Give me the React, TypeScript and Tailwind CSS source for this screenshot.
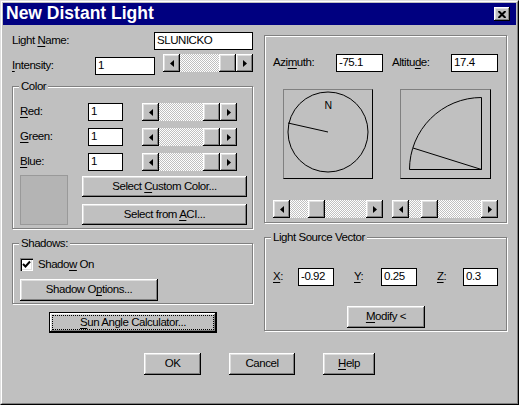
import React from "react"

// win95 bevels
const raised =
  "bg-[#c0c0c0] shadow-[inset_-1px_-1px_0_#000,inset_1px_1px_0_#fff,inset_-2px_-2px_0_#808080,inset_2px_2px_0_#dfdfdf]"
const field = "bg-white border border-black px-[2px] h-[18px] flex items-center shrink-0"
const etched = "relative border border-[#808080] shadow-[inset_1px_1px_0_#fff,1px_1px_0_#fff]"
const track =
  "bg-[#dfdfdf] bg-[image:repeating-conic-gradient(#fff_0%_25%,#c0c0c0_0%_50%)] bg-[length:2px_2px]"

function U({ children }: { children: React.ReactNode }) {
  return <span className="underline underline-offset-[2px] decoration-1">{children}</span>
}

function Legend({ children }: { children: React.ReactNode }) {
  return (
    <span className="absolute left-[6px] -top-[8px] px-[2px] bg-[#c0c0c0] leading-[14px]">{children}</span>
  )
}

function Btn({ className, children }: { className: string; children: React.ReactNode }) {
  return <div className={`${raised} ${className} flex items-center justify-center shrink-0`}>{children}</div>
}

function Arrow({ dir }: { dir: "left" | "right" }) {
  return (
    <div className={`${raised} w-[17px] h-full flex items-center justify-center shrink-0`}>
      <svg width="4" height="7" viewBox="0 0 4 7">
        {dir === "left" ? (
          <polygon points="4,0 4,7 0,3.5" fill="#000" />
        ) : (
          <polygon points="0,0 0,7 4,3.5" fill="#000" />
        )}
      </svg>
    </div>
  )
}

function Scroll({ className, before, after }: { className: string; before: string; after: string }) {
  return (
    <div className={`flex h-[18px] shrink-0 ${className}`}>
      <Arrow dir="left" />
      <div className={`${track} ${before} h-full`} />
      <div className={`${raised} w-[17px] h-full shrink-0`} />
      <div className={`${track} ${after} h-full`} />
      <Arrow dir="right" />
    </div>
  )
}

function ColorRow({ label, first, className }: { label: string; first: string; className?: string }) {
  return (
    <div className={`flex items-center h-[18px] ${className ?? ""}`}>
      <span className="w-[68px]">
        <U>{first}</U>
        {label}
      </span>
      <div className={`${field} w-[35px]`}>1</div>
      <Scroll className="ml-[19px] w-[95px]" before="flex-1" after="w-0" />
    </div>
  )
}

export default function App() {
  return (
    <div className="w-[519px] h-[405px] bg-[#c0c0c0] border border-t-[#dfdfdf] border-l-[#dfdfdf] border-r-black border-b-black font-['Liberation_Sans',Arial,sans-serif] text-[11.5px] tracking-[-0.45px] text-black select-none">
      <div className="h-full border border-t-white border-l-white border-r-[#808080] border-b-[#808080] p-px flex flex-col">
        {/* title bar */}
        <div className="h-[22px] bg-[#000080] flex items-center justify-between pl-[3px] pr-[6px] shrink-0">
          <span className="text-white font-bold text-[17.5px] tracking-normal leading-none">New Distant Light</span>
          <div className={`${raised} w-[16px] h-[14px] flex items-center justify-center`}>
            <svg width="8" height="7" viewBox="0 0 8 7">
              <path d="M0.5 0 L7.5 7 M7.5 0 L0.5 7" stroke="#000" strokeWidth="2" />
            </svg>
          </div>
        </div>

        <div className="flex pl-[9px] pt-[7px] gap-[11px]">
          {/* left column */}
          <div className="w-[241px] flex flex-col">
            <div className="flex items-center justify-between h-[18px]">
              <span>
                Light <U>N</U>ame:
              </span>
              <div className={`${field} w-[99px]`}>SLUNICKO</div>
            </div>
            <div className="flex items-start mt-[4px]">
              <span className="w-[83px] h-[18px] mt-[3px] flex items-center">
                <span>
                  <U>I</U>ntensity:
                </span>
              </span>
              <div className={`${field} w-[60px] mt-[3px]`}>1</div>
              <Scroll className="ml-[8px] w-[90px]" before="flex-1" after="w-0" />
            </div>

            {/* Color */}
            <div className={`${etched} mt-[11px] pt-[16px] pl-[7px] pb-[3px]`}>
              <Legend>Color</Legend>
              <ColorRow first="R" label="ed:" />
              <ColorRow first="G" label="reen:" className="mt-[7px]" />
              <ColorRow first="B" label="lue:" className="mt-[7px]" />
              <div className="flex gap-[14px] mt-[4px]">
                <div className="w-[48px] h-[50px] bg-[#b4b4b4] border border-[#999]" />
                <div className="flex flex-col gap-[7px] pt-px">
                  <Btn className="w-[165px] h-[21px]">
                    <span>
                      Select <U>C</U>ustom Color...
                    </span>
                  </Btn>
                  <Btn className="w-[165px] h-[21px]">
                    <span>
                      Select from <U>A</U>CI...
                    </span>
                  </Btn>
                </div>
              </div>
            </div>

            {/* Shadows */}
            <div className={`${etched} mt-[14px] pt-[14px] pl-[7px] pb-[2px]`}>
              <Legend>Shadows:</Legend>
              <div className="flex items-center gap-[5px] h-[13px]">
                <div className="w-[13px] h-[13px] bg-white shadow-[inset_1px_1px_0_#808080,inset_2px_2px_0_#000,inset_-1px_-1px_0_#fff,inset_-2px_-2px_0_#dfdfdf] flex items-center justify-center">
                  <svg width="9" height="9" viewBox="0 0 9 9">
                    <path d="M1 4 L3.5 6.5 L8 1.5" fill="none" stroke="#000" strokeWidth="2" />
                  </svg>
                </div>
                <span>
                  Shado<U>w</U> On
                </span>
              </div>
              <Btn className="w-[138px] h-[22px] mt-[8px]">
                <span>
                  Shadow O<U>p</U>tions...
                </span>
              </Btn>
            </div>

            {/* default button */}
            <div className="ml-[37px] mt-[8px] w-[168px] h-[21px] border border-black">
              <div className={`${raised} h-full p-[2px]`}>
                <div className="h-full border border-dotted border-black flex items-center justify-center">
                  <span>
                    <U>S</U>un Angle Calculator...
                  </span>
                </div>
              </div>
            </div>
          </div>

          {/* right column */}
          <div className="w-[243px] mt-[3px] flex flex-col">
            <div className={`${etched} pt-[18px] pl-[8px] pb-[4px]`}>
              <div className="flex items-center h-[18px]">
                <span className="w-[63px]">
                  Azi<U>m</U>uth:
                </span>
                <div className={`${field} w-[47px]`}>-75.1</div>
                <span className="w-[59px] ml-[9px]">
                  Altitu<U>d</U>e:
                </span>
                <div className={`${field} w-[47px]`}>17.4</div>
              </div>
              <div className="flex ml-[10px] mt-[17px] gap-[27px]">
                <div className="w-[90px] h-[90px] border border-t-[#808080] border-l-[#808080] border-r-black border-b-black">
                  <svg width="88" height="88" viewBox="0 0 88 88">
                    <circle cx="44" cy="42" r="40" fill="none" stroke="#000" strokeWidth="1" />
                    <text x="44" y="19" fontSize="10.5" textAnchor="middle" fontFamily="Liberation Sans, Arial, sans-serif" fill="#000">
                      N
                    </text>
                    <line x1="44" y1="42" x2="4" y2="33" stroke="#000" strokeWidth="1" />
                  </svg>
                </div>
                <div className="w-[91px] h-[90px] border border-t-[#808080] border-l-[#808080] border-r-black border-b-black">
                  <svg width="89" height="88" viewBox="0 0 89 88">
                    <path d="M80.5 79.5 L80.5 7.5 A72 72 0 0 0 8.5 79.5 Z" fill="none" stroke="#000" strokeWidth="1" />
                    <line x1="80.5" y1="79.5" x2="12" y2="58" stroke="#000" strokeWidth="1" />
                  </svg>
                </div>
              </div>
              <div className="flex mt-[21px] gap-[9px]">
                <Scroll className="w-[110px]" before="w-[18px]" after="flex-1" />
                <Scroll className="w-[106px]" before="w-[12px]" after="flex-1" />
              </div>
            </div>

            {/* Light Source Vector */}
            <div className={`${etched} mt-[14px] pt-[30px] pl-[8px] pb-[2px]`}>
              <Legend>Light Source Vector</Legend>
              <div className="flex items-center h-[18px]">
                <span className="w-[25px]">
                  <U>X</U>:
                </span>
                <div className={`${field} w-[36px]`}>-0.92</div>
                <span className="w-[27px] ml-[20px]">
                  <U>Y</U>:
                </span>
                <div className={`${field} w-[36px]`}>0.25</div>
                <span className="w-[26px] ml-[20px]">
                  <U>Z</U>:
                </span>
                <div className={`${field} w-[35px]`}>0.3</div>
              </div>
              <Btn className="w-[78px] h-[22px] mt-[20px] ml-[74px]">
                <span>
                  <U>M</U>odify &lt;
                </span>
              </Btn>
            </div>
          </div>
        </div>

        {/* dialog buttons */}
        <div className="flex justify-center gap-[28px] mt-[20px]">
          <Btn className="w-[57px] h-[22px]">OK</Btn>
          <Btn className="w-[66px] h-[22px]">Cancel</Btn>
          <Btn className="w-[52px] h-[22px]">
            <span>
              <U>H</U>elp
            </span>
          </Btn>
        </div>
      </div>
    </div>
  )
}
